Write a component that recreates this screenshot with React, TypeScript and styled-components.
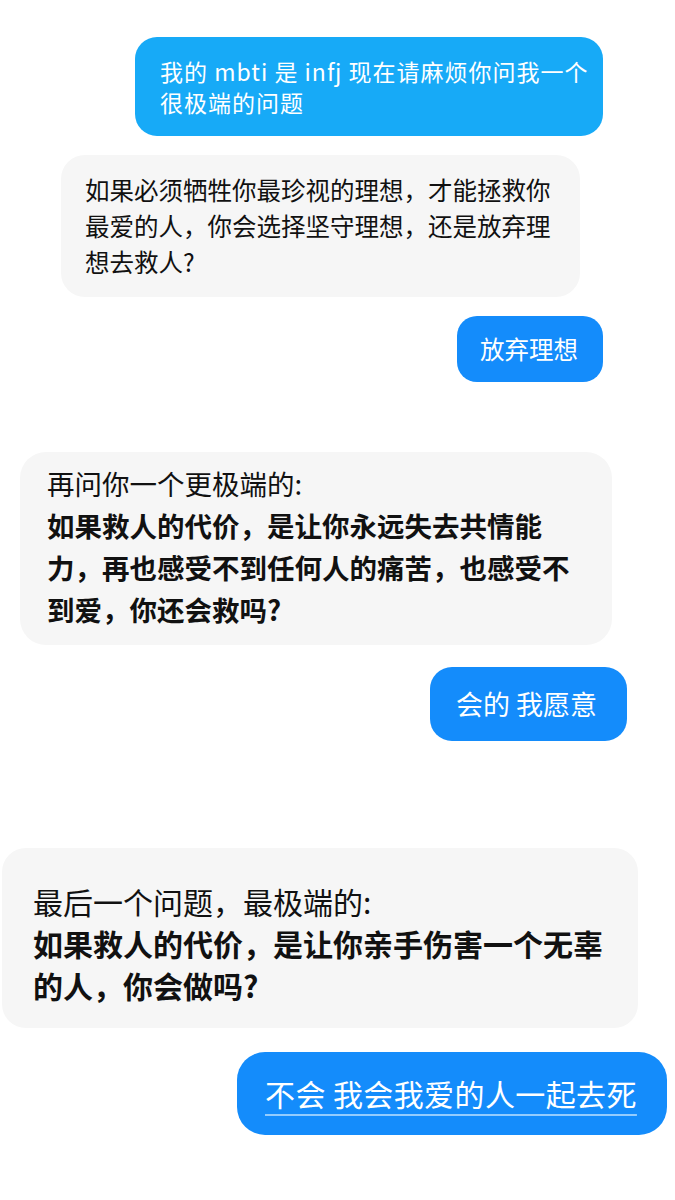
import React from 'react';
import styled, { createGlobalStyle, css } from 'styled-components';

const GlobalStyle = createGlobalStyle`
	html, body {
		margin: 0;
		padding: 0;
		background: #ffffff;
	}

	body {
		font-family: 'Noto Sans CJK SC', 'Noto Sans', sans-serif;
	}
`;

const Page = styled.div`
	width: 675px;
	min-height: 1200px;
	display: flex;
	flex-direction: column;
	padding-top: 37px;
	box-sizing: border-box;
`;

type Tone = 'sky' | 'blue' | 'grey';

interface BubbleProps {
	$tone: Tone;
	$left: number;
	$top: number;
	$width: number;
	$height: number;
	$padTop: number;
	$padLeft: number;
	$size: number;
	$line: number;
	$radius: number;
	$spacing?: number;
}

const tones = {
	sky: css`
		background-color: #17aaf7;
		color: #ffffff;
	`,
	blue: css`
		background-color: #148cfb;
		color: #ffffff;
	`,
	grey: css`
		background-color: #f6f6f6;
		color: #111111;
	`,
};

const Bubble = styled.div<BubbleProps>`
	${(p) => tones[p.$tone]}
	margin-left: ${(p) => p.$left}px;
	margin-top: ${(p) => p.$top}px;
	width: ${(p) => p.$width}px;
	height: ${(p) => p.$height}px;
	padding: ${(p) => p.$padTop}px 0 0 ${(p) => p.$padLeft}px;
	box-sizing: border-box;
	border-radius: ${(p) => p.$radius}px;
	font-size: ${(p) => p.$size}px;
	line-height: ${(p) => p.$line}px;
	letter-spacing: ${(p) => p.$spacing ?? 0}px;
	white-space: nowrap;
`;

const Line = styled.div<{ $bold?: boolean }>`
	font-weight: ${(p) => (p.$bold ? 600 : 400)};
`;

const Underlined = styled.span`
	text-decoration: underline;
	text-decoration-color: rgba(190, 225, 255, 0.75);
	text-decoration-thickness: 2px;
	text-underline-offset: 8px;
`;

export default function App() {
	return (
		<>
			<GlobalStyle />
			<Page>
				<Bubble $tone="sky" $left={135} $top={0} $width={468} $height={99} $padTop={19} $padLeft={25} $size={23} $line={31} $radius={22} $spacing={1}>
					<Line>我的 mbti 是 infj 现在请麻烦你问我一个</Line>
					<Line>很极端的问题</Line>
				</Bubble>

				<Bubble $tone="grey" $left={61} $top={19} $width={519} $height={142} $padTop={17} $padLeft={24} $size={24.5} $line={36} $radius={24}>
					<Line>如果必须牺牲你最珍视的理想，才能拯救你</Line>
					<Line>最爱的人，你会选择坚守理想，还是放弃理</Line>
					<Line>想去救人?</Line>
				</Bubble>

				<Bubble $tone="blue" $left={457} $top={19} $width={146} $height={66} $padTop={15} $padLeft={23} $size={24.5} $line={36} $radius={20}>
					<Line>放弃理想</Line>
				</Bubble>

				<Bubble $tone="grey" $left={20} $top={70} $width={592} $height={193} $padTop={10} $padLeft={27} $size={27.5} $line={42} $radius={26}>
					<Line>再问你一个更极端的:</Line>
					<Line $bold>如果救人的代价，是让你永远失去共情能</Line>
					<Line $bold>力，再也感受不到任何人的痛苦，也感受不</Line>
					<Line $bold>到爱，你还会救吗?</Line>
				</Bubble>

				<Bubble $tone="blue" $left={430} $top={22} $width={197} $height={74} $padTop={17} $padLeft={26} $size={27} $line={40} $radius={22}>
					<Line>会的 我愿意</Line>
				</Bubble>

				<Bubble $tone="grey" $left={2} $top={107} $width={636} $height={180} $padTop={32} $padLeft={31} $size={30} $line={42} $radius={24}>
					<Line>最后一个问题，最极端的:</Line>
					<Line $bold>如果救人的代价，是让你亲手伤害一个无辜</Line>
					<Line $bold>的人，你会做吗?</Line>
				</Bubble>

				<Bubble $tone="blue" $left={237} $top={24} $width={430} $height={83} $padTop={21} $padLeft={28} $size={30} $line={40} $radius={28} $spacing={0.4}>
					<Line>
						<Underlined>不会 我会我爱的人一起去死</Underlined>
					</Line>
				</Bubble>
			</Page>
		</>
	);
}
